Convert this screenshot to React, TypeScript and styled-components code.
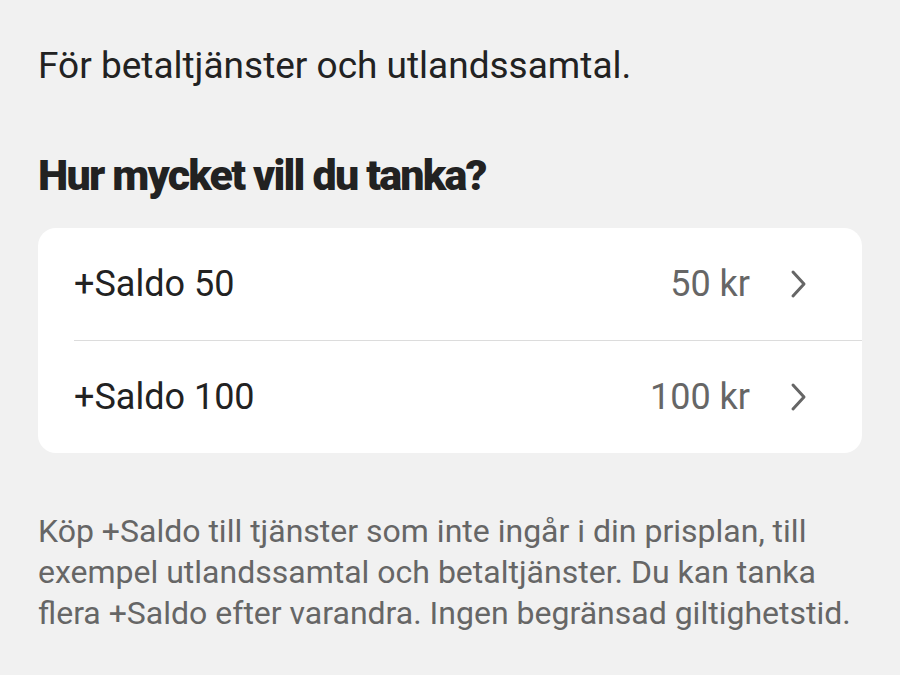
import React from "react";
import styled, { createGlobalStyle } from "styled-components";

const GlobalStyle = createGlobalStyle`
  html, body {
    margin: 0;
    padding: 0;
    background: #f1f1f1;
  }
  body {
    font-family: Roboto, "Noto Sans", sans-serif;
  }
`;

const Page = styled.div`
  padding: 44px 38px 40px;
  min-height: 100vh;
  box-sizing: border-box;
  background: #f1f1f1;
`;

const Intro = styled.p`
  margin: 0;
  font-size: 37px;
  line-height: 44px;
  color: #222;
`;

const Heading = styled.h2`
  margin: 63px 0 29px;
  font-size: 43px;
  line-height: 48px;
  font-weight: 900;
  letter-spacing: -1.8px;
  color: #222;
`;

const Card = styled.div`
  background: #fff;
  border-radius: 18px;
  overflow: hidden;
`;

const Row = styled.div<{ $divider?: boolean }>`
  display: flex;
  align-items: center;
  height: 112px;
  margin-left: 36px;
  padding-right: 52px;
  border-top: ${(p) => (p.$divider ? "1px solid #dcdcdc" : "none")};
  cursor: pointer;
`;

const Name = styled.span`
  flex: 1;
  font-size: 36px;
  color: #222;
`;

const Price = styled.span`
  font-size: 36px;
  color: #666;
  margin-right: 38px;
`;

const Chevron = () => (
  <svg width="22" height="30" viewBox="0 0 22 30" fill="none">
    <path
      d="M5 3 L16 15 L5 27"
      stroke="#666"
      strokeWidth="3"
      strokeLinecap="round"
      strokeLinejoin="round"
    />
  </svg>
);

const Footnote = styled.p`
  margin: 58px 0 0;
  font-size: 32px;
  line-height: 41px;
  color: #666;
`;

const options = [
  { name: "+Saldo 50", price: "50 kr" },
  { name: "+Saldo 100", price: "100 kr" },
];

const App = () => (
  <>
    <GlobalStyle />
    <Page>
      <Intro>För betaltjänster och utlandssamtal.</Intro>
      <Heading>Hur mycket vill du tanka?</Heading>
      <Card>
        {options.map((o, i) => (
          <Row key={o.name} $divider={i > 0}>
            <Name>{o.name}</Name>
            <Price>{o.price}</Price>
            <Chevron />
          </Row>
        ))}
      </Card>
      <Footnote>
        Köp +Saldo till tjänster som inte ingår i din prisplan, till exempel
        utlandssamtal och betaltjänster. Du kan tanka flera +Saldo efter
        varandra. Ingen begränsad giltighetstid.
      </Footnote>
    </Page>
  </>
);

export default App;
